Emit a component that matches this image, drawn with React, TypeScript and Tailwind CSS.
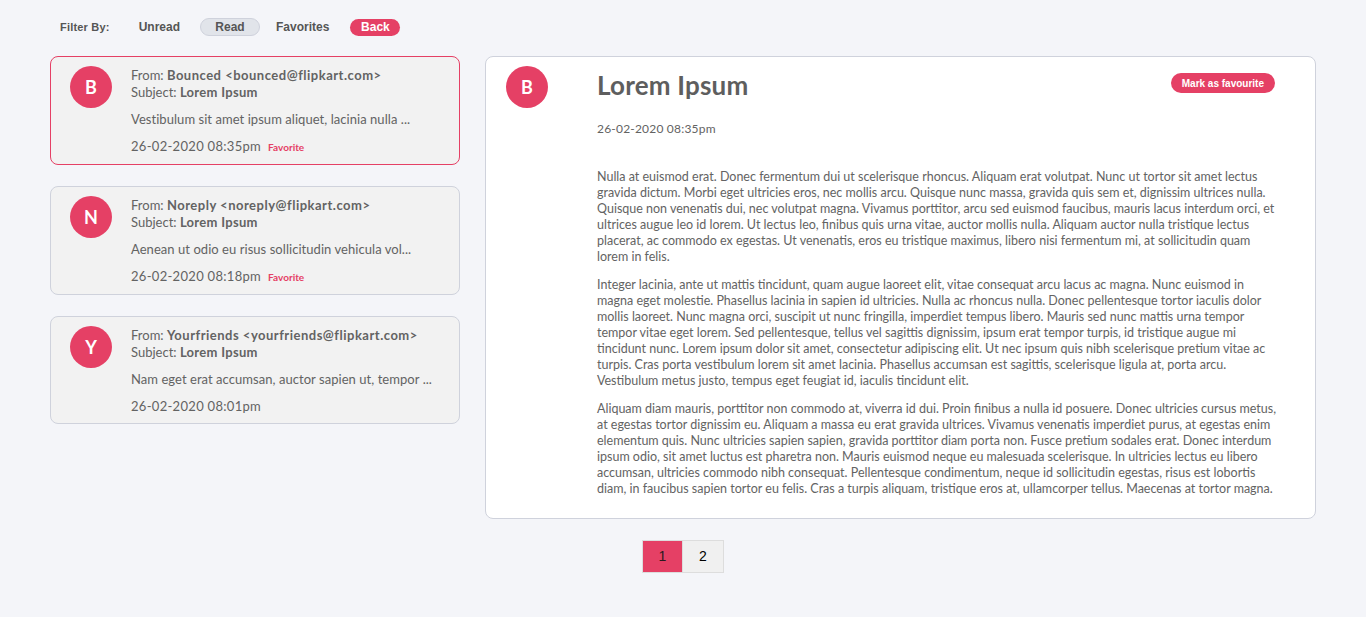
import React from 'react';

const emails = [
  {
    letter: 'B',
    name: 'Bounced',
    address: 'bounced@flipkart.com',
    preview: 'Vestibulum sit amet ipsum aliquet, lacinia nulla ...',
    date: '26-02-2020 08:35pm',
    favorite: true,
    selected: true,
  },
  {
    letter: 'N',
    name: 'Noreply',
    address: 'noreply@flipkart.com',
    preview: 'Aenean ut odio eu risus sollicitudin vehicula vol...',
    date: '26-02-2020 08:18pm',
    favorite: true,
    selected: false,
  },
  {
    letter: 'Y',
    name: 'Yourfriends',
    address: 'yourfriends@flipkart.com',
    preview: 'Nam eget erat accumsan, auctor sapien ut, tempor ...',
    date: '26-02-2020 08:01pm',
    favorite: false,
    selected: false,
  },
];

const paragraphs = [
  'Nulla at euismod erat. Donec fermentum dui ut scelerisque rhoncus. Aliquam erat volutpat. Nunc ut tortor sit amet lectus gravida dictum. Morbi eget ultricies eros, nec mollis arcu. Quisque nunc massa, gravida quis sem et, dignissim ultrices nulla. Quisque non venenatis dui, nec volutpat magna. Vivamus porttitor, arcu sed euismod faucibus, mauris lacus interdum orci, et ultrices augue leo id lorem. Ut lectus leo, finibus quis urna vitae, auctor mollis nulla. Aliquam auctor nulla tristique lectus placerat, ac commodo ex egestas. Ut venenatis, eros eu tristique maximus, libero nisi fermentum mi, at sollicitudin quam lorem in felis.',
  'Integer lacinia, ante ut mattis tincidunt, quam augue laoreet elit, vitae consequat arcu lacus ac magna. Nunc euismod in magna eget molestie. Phasellus lacinia in sapien id ultricies. Nulla ac rhoncus nulla. Donec pellentesque tortor iaculis dolor mollis laoreet. Nunc magna orci, suscipit ut nunc fringilla, imperdiet tempus libero. Mauris sed nunc mattis urna tempor tempor vitae eget lorem. Sed pellentesque, tellus vel sagittis dignissim, ipsum erat tempor turpis, id tristique augue mi tincidunt nunc. Lorem ipsum dolor sit amet, consectetur adipiscing elit. Ut nec ipsum quis nibh scelerisque pretium vitae ac turpis. Cras porta vestibulum lorem sit amet lacinia. Phasellus accumsan est sagittis, scelerisque ligula at, porta arcu. Vestibulum metus justo, tempus eget feugiat id, iaculis tincidunt elit.',
  'Aliquam diam mauris, porttitor non commodo at, viverra id dui. Proin finibus a nulla id posuere. Donec ultricies cursus metus, at egestas tortor dignissim eu. Aliquam a massa eu erat gravida ultrices. Vivamus venenatis imperdiet purus, at egestas enim elementum quis. Nunc ultricies sapien sapien, gravida porttitor diam porta non. Fusce pretium sodales erat. Donec interdum ipsum odio, sit amet luctus est pharetra non. Mauris euismod neque eu malesuada scelerisque. In ultricies lectus eu libero accumsan, ultricies commodo nibh consequat. Pellentesque condimentum, neque id sollicitudin egestas, risus est lobortis diam, in faucibus sapien tortor eu felis. Cras a turpis aliquam, tristique eros at, ullamcorper tellus. Maecenas at tortor magna.',
];

function Avatar({ letter }: { letter: string }) {
  return (
    <div className="w-[42px] h-[42px] shrink-0 rounded-full bg-[#e54065] flex items-center justify-center text-white text-[18px] font-bold">
      {letter}
    </div>
  );
}

function App() {
  return (
    <div className="min-h-screen bg-[#f4f5f9] text-[#636363] font-['Lato',sans-serif] px-[50px] pt-[18px]">
      {/* Filter bar */}
      <div className="flex items-center h-[18px] font-['Liberation_Sans',Arial,sans-serif] text-[#555]">
        <span className="ml-[10px] text-[11px] font-bold tracking-[0.2px]">Filter By:</span>
        <span className="ml-[29px] text-[12px] font-semibold">Unread</span>
        <span className="ml-[20px] h-[18px] w-[60px] rounded-full bg-[#e1e4ea] border border-[#cfd2dc] flex items-center justify-center text-[12px] font-semibold">
          Read
        </span>
        <span className="ml-[16px] text-[12px] font-semibold">Favorites</span>
        <span className="ml-[21px] h-[17px] w-[50px] rounded-full bg-[#e54065] flex items-center justify-center text-[12px] font-bold text-white">
          Back
        </span>
      </div>

      <div className="flex items-start gap-[25px] mt-[20px]">
        {/* Email list */}
        <div className="w-[410px] shrink-0 flex flex-col gap-[21px]">
          {emails.map((e) => (
            <div
              key={e.letter}
              className={`flex bg-[#f2f2f2] border rounded-lg pl-[19px] pt-[9px] pb-[8px] ${
                e.selected ? 'border-[#e54065]' : 'border-[#cfd2dc]'
              }`}
            >
              <Avatar letter={e.letter} />
              <div className="ml-[19px] text-[13px] leading-[17px] pt-[1px]">
                <div>
                  From:{' '}
                  <span className="font-bold tracking-[0.5px]">
                    {e.name} &lt;{e.address}&gt;
                  </span>
                </div>
                <div>
                  Subject: <span className="font-bold tracking-[0.3px]">Lorem Ipsum</span>
                </div>
                <div className="mt-[10px] tracking-[0.05px]">{e.preview}</div>
                <div className="mt-[10px] flex items-baseline">
                  <span className="tracking-[0.3px]">{e.date}</span>
                  {e.favorite && (
                    <span className="ml-[7px] text-[10px] font-bold text-[#e54065]">Favorite</span>
                  )}
                </div>
              </div>
            </div>
          ))}
        </div>

        {/* Reading pane */}
        <div className="flex-1 bg-white border border-[#cfd2dc] rounded-lg flex pl-[20px] pr-[38px] pt-[9px] pb-[21px]">
          <Avatar letter="B" />
          <div className="ml-[49px] flex-1">
            <div className="flex items-start justify-between">
              <h1 className="text-[26px] leading-[38px] font-bold text-[#5e5e5e] tracking-[0.2px]">Lorem Ipsum</h1>
              <button className="mt-[7px] mr-[2px] h-[20px] px-[11px] rounded-full bg-[#e54065] text-white text-[10px] font-bold font-['Liberation_Sans',Arial,sans-serif]">
                Mark as favourite
              </button>
            </div>
            <div className="mt-[17px] text-[12px] leading-[16px] tracking-[0.2px]">26-02-2020 08:35pm</div>
            <div className="mt-[32px] flex flex-col gap-[12px] text-[12.5px] leading-[16px]">
              {paragraphs.map((p, i) => (
                <p key={i}>{p}</p>
              ))}
            </div>
          </div>
        </div>
      </div>

      {/* Pagination */}
      <div className="mt-[21px] flex justify-center font-['Liberation_Sans',Arial,sans-serif] text-[14px]">
        <div className="w-[41px] h-[33px] flex items-center justify-center bg-[#e54065] border border-[#dddddd] text-[#2a1a1e]">
          1
        </div>
        <div className="w-[41px] h-[33px] flex items-center justify-center bg-[#f0f0f0] border border-l-0 border-[#dddddd] text-black">
          2
        </div>
      </div>
    </div>
  );
}

export default App;
